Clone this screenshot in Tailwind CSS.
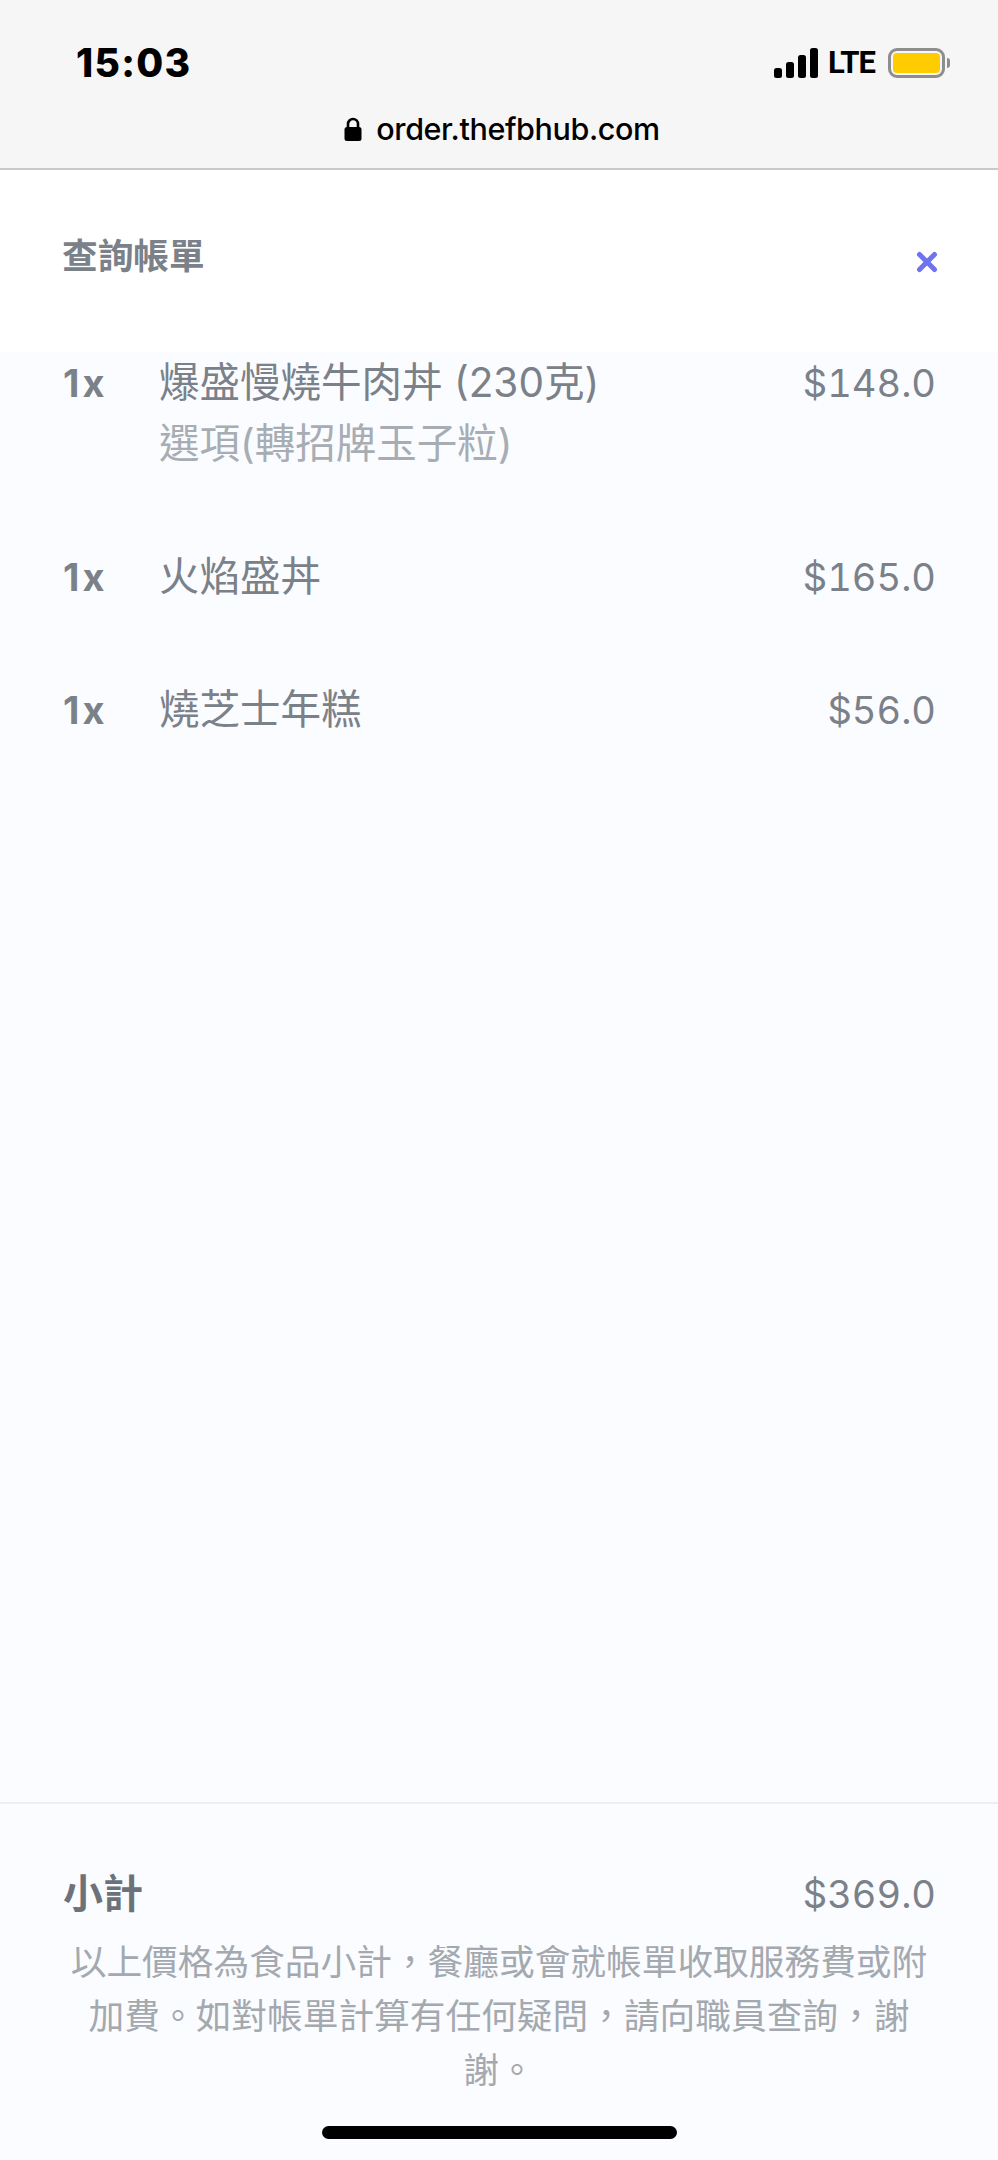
<!DOCTYPE html>
<html lang="zh-Hant">
<head>
    <meta charset="UTF-8">
    <meta name="viewport" content="width=device-width, initial-scale=1.0">
    <title>查詢帳單</title>
    <script src="https://cdn.jsdelivr.net/npm/@tailwindcss/browser@4"></script>
</head>
<body>
    <div class="relative w-[998px] h-[2160px] flex flex-col bg-[#fbfcff] overflow-hidden font-['Inter','Noto_Sans_CJK_TC',sans-serif]">

        <!-- browser status bar -->
        <div class="h-[170px] shrink-0 bg-[#f6f6f6] border-b-2 border-[#c9c9c9] flex flex-col">
            <div class="h-[96px] pt-[30px] pl-[76px] pr-[48px] flex justify-between items-center">
                <span class="font-['Inter',sans-serif] font-extrabold text-[39px] leading-[46px] text-black tracking-[1.3px]">15:03</span>
                <div class="flex items-center">
                    <svg width="44" height="30" viewBox="0 0 44 30" class="block">
                        <rect x="0" y="20" width="8" height="10" rx="2.5" fill="#000"/>
                        <rect x="12" y="14" width="8" height="16" rx="2.5" fill="#000"/>
                        <rect x="24" y="7" width="8" height="23" rx="2.5" fill="#000"/>
                        <rect x="36" y="0" width="8" height="30" rx="2.5" fill="#000"/>
                    </svg>
                    <span class="ml-[10px] w-[50px] font-['Roboto',sans-serif] font-bold text-[31px] leading-[32px] text-black tracking-[-1px] whitespace-nowrap">LTE</span>
                    <div class="ml-[10px] w-[57px] h-[30px] rounded-[9px] border-[3px] border-[#8e8e8e] p-[2px]">
                        <div class="w-full h-full rounded-[4px] bg-[#ffcc00]"></div>
                    </div>
                    <div class="ml-[2px] w-[3px] h-[10px] rounded-r-[3px] bg-[#8e8e8e]"></div>
                </div>
            </div>
            <div class="flex justify-center items-center gap-[14px] pt-[13px] pl-[6px]">
                <svg width="18" height="24" viewBox="0 0 18 24" class="block">
                    <path d="M4 11V7a5 5 0 0 1 10 0v4" fill="none" stroke="#000" stroke-width="2.6"/>
                    <rect x="0.5" y="10" width="17" height="14" rx="2.5" fill="#000"/>
                </svg>
                <span class="font-medium text-[30.5px] leading-[40px] text-black tracking-[-0.4px]">order.thefbhub.com</span>
            </div>
        </div>

        <!-- title -->
        <div class="h-[182px] shrink-0 bg-white pl-[62px] pr-[62px] flex justify-between">
            <h1 class="pt-[61px] font-bold text-[35.7px] leading-[50px] text-[#7b8189]">查詢帳單</h1>
            <svg width="22" height="22" viewBox="0 0 22 22" class="block mt-[81px] mr-[-2px]">
                <path d="M3.5 3.5l15 15M18.5 3.5l-15 15" fill="none" stroke="#6f73ee" stroke-width="5" stroke-linecap="round"/>
            </svg>
        </div>

        <!-- items -->
        <div class="flex-1 flex flex-col pt-[1px] px-[63px] text-[#7b8189]">
            <div class="flex pb-[72px]">
                <span class="w-[96px] shrink-0 font-bold text-[38px] leading-[60px] tracking-[3px]">1x</span>
                <div class="flex-1">
                    <div class="text-[40.5px] leading-[60px]">爆盛慢燒牛肉丼 (230克)</div>
                    <div class="text-[40.5px] leading-[62px] text-[#a7adb3]">選項(轉招牌玉子粒)</div>
                </div>
                <span class="text-[38px] leading-[60px] tabular-nums mr-[-1px]">$148.0</span>
            </div>
            <div class="flex pb-[73px]">
                <span class="w-[96px] shrink-0 font-bold text-[38px] leading-[60px] tracking-[3px]">1x</span>
                <div class="flex-1 text-[40.5px] leading-[60px]">火焰盛丼</div>
                <span class="text-[38px] leading-[60px] tabular-nums mr-[-1px]">$165.0</span>
            </div>
            <div class="flex">
                <span class="w-[96px] shrink-0 font-bold text-[38px] leading-[60px] tracking-[3px]">1x</span>
                <div class="flex-1 text-[40.5px] leading-[60px]">燒芝士年糕</div>
                <span class="text-[38px] leading-[60px] tabular-nums mr-[-1px]">$56.0</span>
            </div>
        </div>

        <!-- subtotal -->
        <div class="h-[358px] shrink-0 border-t-2 border-[#eceef1] px-[63px]">
            <div class="flex justify-between pt-[60px] text-[#7b8189]">
                <span class="font-semibold text-[40px] leading-[60px] text-[#6c7279]">小計</span>
                <span class="text-[38px] leading-[60px] tabular-nums mr-[-1px]">$369.0</span>
            </div>
            <p class="mt-[11px] text-center text-[35.7px] leading-[54px] text-[#a3a9af]">以上價格為食品小計，餐廳或會就帳單收取服務費或附加費。如對帳單計算有任何疑問，請向職員查詢，謝謝。</p>
        </div>

        <!-- home indicator -->
        <div class="absolute left-[322px] bottom-[21px] w-[355px] h-[13px] rounded-full bg-black"></div>
    </div>
</body>
</html>
